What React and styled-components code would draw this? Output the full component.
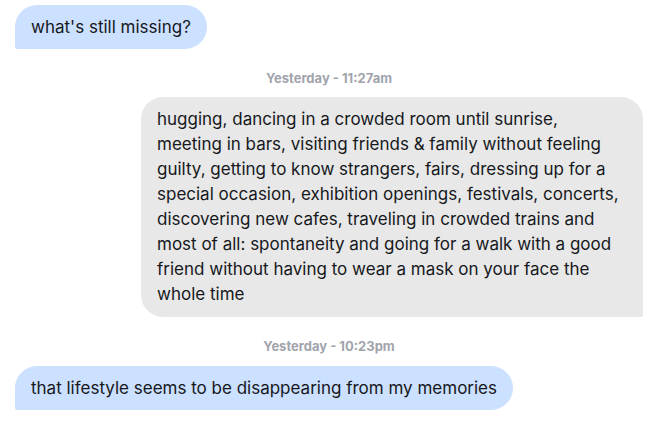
import React from 'react';
import styled, { createGlobalStyle } from 'styled-components';

const GlobalStyle = createGlobalStyle`
  html, body {
    margin: 0;
    padding: 0;
    background: #ffffff;
  }
  body {
    font-family: Inter, "Noto Sans", "Liberation Sans", sans-serif;
    -webkit-font-smoothing: antialiased;
  }
`;

const Thread = styled.div`
  display: flex;
  flex-direction: column;
  padding: 5px 17px 0 15px;
  width: 660px;
  box-sizing: border-box;
`;

const Bubble = styled.div`
  align-self: ${p => (p.$mine ? 'flex-end' : 'flex-start')};
  max-width: 502px;
  box-sizing: border-box;
  padding: ${p => (p.$mine ? '10px 24px 10px 16px' : '10px 16px 9px')};
  font-size: 17px;
  line-height: 25px;
  color: #16181c;
  background: ${p => (p.$mine ? '#e8e8e8' : '#cce0ff')};
  border-radius: ${p => (p.$mine ? '22px 22px 2px 22px' : '22px 22px 22px 2px')};
`;

const Stamp = styled.div`
  align-self: center;
  margin: ${p => p.$top || '20px'} 0 ${p => p.$bottom || '11px'};
  font-size: 13px;
  line-height: 16px;
  font-weight: 700;
  color: #a1a4ac;
`;

const messages = [
  { mine: false, text: "what's still missing?" },
  { stamp: 'Yesterday - 11:27am', top: '21px' },
  {
    mine: true,
    text:
      'hugging, dancing in a crowded room until sunrise, meeting in bars, visiting friends & family without feeling guilty, getting to know strangers, fairs, dressing up for a special occasion, exhibition openings, festivals, concerts, discovering new cafes, traveling in crowded trains and most of all: spontaneity and going for a walk with a good friend without having to wear a mask on your face the whole time',
  },
  { stamp: 'Yesterday - 10:23pm', top: '21px', bottom: '12px' },
  { mine: false, text: 'that lifestyle seems to be disappearing from my memories' },
];

export default function App() {
  return (
    <>
      <GlobalStyle />
      <Thread>
        {messages.map((m, i) =>
          m.stamp ? (
            <Stamp key={i} $top={m.top} $bottom={m.bottom}>{m.stamp}</Stamp>
          ) : (
            <Bubble key={i} $mine={m.mine}>{m.text}</Bubble>
          )
        )}
      </Thread>
    </>
  );
}
